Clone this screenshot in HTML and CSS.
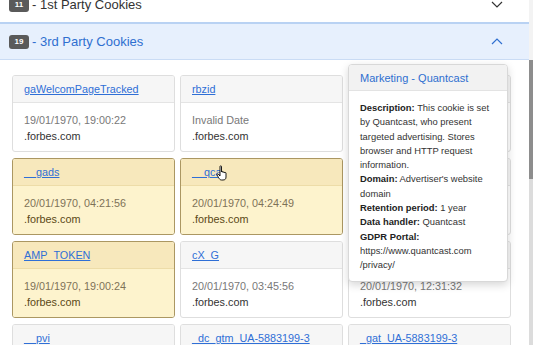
FILE: index.html
```html
<!DOCTYPE html>
<html>
<head>
<meta charset="utf-8">
<link rel="stylesheet" href="styles.css">
</head>
<body>
<div class="app">
  <main class="content">
    <div class="acc-header first">
      <span class="badge">11</span>
      <span class="acc-title">- 1st Party Cookies</span>
      <svg class="chev" width="12" height="7" viewBox="0 0 12 7"><polyline points="1,1 6,6 11,1" fill="none" stroke="#333" stroke-width="1.2"/></svg>
    </div>
    <div class="acc-header active">
      <span class="badge">19</span>
      <span class="acc-title">- 3rd Party Cookies</span>
      <svg class="chev" width="12" height="7" viewBox="0 0 12 7"><polyline points="1,6 6,1 11,6" fill="none" stroke="#2f6fd0" stroke-width="1.2"/></svg>
    </div>
    <div class="acc-body">
      <div class="grid">
        <div class="card"><div class="card-head"><a href="#">gaWelcomPageTracked</a></div><div class="card-body"><div class="date">19/01/1970, 19:00:22</div><div class="domain">.forbes.com</div></div></div>
        <div class="card"><div class="card-head"><a href="#">rbzid</a></div><div class="card-body"><div class="date">Invalid Date</div><div class="domain">.forbes.com</div></div></div>
        <div class="card"><div class="card-head"><a href="#">_cb</a></div><div class="card-body"><div class="date">20/01/1970, 05:12:10</div><div class="domain">.forbes.com</div></div></div>

        <div class="card warn"><div class="card-head"><a href="#">__gads</a></div><div class="card-body"><div class="date">20/01/1970, 04:21:56</div><div class="domain">.forbes.com</div></div></div>
        <div class="card warn"><div class="card-head"><a href="#">__qca</a></div><div class="card-body"><div class="date">20/01/1970, 04:24:49</div><div class="domain">.forbes.com</div></div></div>
        <div class="card"><div class="card-head"><a href="#">_cb_ls</a></div><div class="card-body"><div class="date">20/01/1970, 05:12:10</div><div class="domain">.forbes.com</div></div></div>

        <div class="card warn"><div class="card-head"><a href="#">AMP_TOKEN</a></div><div class="card-body"><div class="date">19/01/1970, 19:00:24</div><div class="domain">.forbes.com</div></div></div>
        <div class="card"><div class="card-head"><a href="#">cX_G</a></div><div class="card-body"><div class="date">20/01/1970, 03:45:56</div><div class="domain">.forbes.com</div></div></div>
        <div class="card"><div class="card-head"><a href="#">_chartbeat2</a></div><div class="card-body"><div class="date">20/01/1970, 12:31:32</div><div class="domain">.forbes.com</div></div></div>

        <div class="card"><div class="card-head"><a href="#">__pvi</a></div><div class="card-body"><div class="date">20/01/1970, 05:00:00</div><div class="domain">.forbes.com</div></div></div>
        <div class="card"><div class="card-head"><a href="#">_dc_gtm_UA-5883199-3</a></div><div class="card-body"><div class="date">19/01/1970, 19:01:22</div><div class="domain">.forbes.com</div></div></div>
        <div class="card"><div class="card-head"><a href="#">_gat_UA-5883199-3</a></div><div class="card-body"><div class="date">19/01/1970, 19:01:22</div><div class="domain">.forbes.com</div></div></div>
      </div>
    </div>

    <div class="popover">
      <div class="pop-head">Marketing - Quantcast</div>
      <div class="pop-body">
        <b>Description:</b> This cookie is set<br>
        by Quantcast, who present<br>
        targeted advertising. Stores<br>
        browser and HTTP request<br>
        information.<br>
        <b>Domain:</b> Advertiser's website<br>
        domain<br>
        <b>Retention period:</b> 1 year<br>
        <b>Data handler:</b> Quantcast<br>
        <b>GDPR Portal:</b><br>
        https://www.quantcast.com<br>
        /privacy/
      </div>
    </div>

    <svg class="cursor" width="12" height="16" viewBox="0 0 12 16"><path d="M4 1.5C4 0.6 5.5 0.6 5.5 1.5V7C5.5 6.2 7 6.2 7 7V7.5C7 6.8 8.5 6.8 8.5 7.5V8C8.5 7.3 10 7.3 10 8V12C10 14 9 15 7 15H5.5C4 15 3.5 14 2.5 12.5L1 10C0.6 9.3 1.5 8.5 2.2 9.2L4 11Z" fill="#fff" stroke="#000" stroke-width="0.9" stroke-linejoin="round"/></svg>
  </main>
  <div class="scrollbar">
    <div class="sb-top"></div>
    <div class="sb-thumb"></div>
    <div class="sb-track"></div>
  </div>
</div>
</body>
</html>
```

FILE: styles.css
```css
* { box-sizing: border-box; }
html, body { margin: 0; padding: 0; }
body {
  font-family: "Liberation Sans", Arial, sans-serif;
  background: #fff;
  color: #333;
}
.app {
  display: flex;
  width: 533px;
  height: 345px;
  overflow: hidden;
}
.content {
  flex: 1;
  position: relative;
  overflow: hidden;
}
.acc-header {
  display: flex;
  align-items: center;
  height: 35px;
  padding: 0 26px 0 9px;
  gap: 3px;
  font-size: 13px;
  color: #333;
}
.acc-header.first {
  margin-top: -13px;
}
.acc-header.active {
  height: 38px;
  background: #e7f0fd;
  color: #2f6fd0;
  border-top: 2px solid #b9d2f3;
  border-bottom: 1px solid #cadcf5;
}
.acc-title {
  margin-right: auto;
}
.badge {
  display: inline-flex;
  align-items: center;
  justify-content: center;
  width: 20px;
  height: 14px;
  background: #5a5a5a;
  color: #fff;
  font-size: 8px;
  font-weight: bold;
  border-radius: 3px;
}
.chev {
  display: block;
}
.acc-body {
  padding: 15px 18px 0 12px;
}
.grid {
  display: grid;
  grid-template-columns: repeat(3, 163px);
  grid-auto-rows: 77px;
  column-gap: 5px;
  row-gap: 6px;
}
.card {
  border: 1px solid #dedede;
  border-radius: 3px;
  overflow: hidden;
  background: #fff;
  font-size: 10.8px;
}
.card-head {
  background: #f6f6f6;
  border-bottom: 1px solid #e4e4e4;
  padding: 6px 11px 5px;
  line-height: 15px;
  white-space: nowrap;
}
.card-head a {
  color: #2f6fd6;
  text-decoration: underline;
}
.card-body {
  padding: 9px 11px 7px;
  line-height: 16px;
}
.date { color: #787878; }
.domain { color: #333; }
.card.warn {
  border-color: #ab9762;
}
.card.warn .card-head {
  background: #f7e8bc;
  border-bottom-color: #eddca8;
}
.card.warn .card-body {
  background: #fdf3cd;
  height: 100%;
}
.card.warn .date { color: #7d7258; }
.card.warn .domain { color: #5a4816; }

.popover {
  position: absolute;
  left: 348px;
  top: 64px;
  width: 160px;
  background: #fff;
  border: 1px solid #d8d8d8;
  border-radius: 4px;
  box-shadow: 0 3px 8px rgba(0, 0, 0, 0.16);
  overflow: hidden;
}
.pop-head {
  height: 26px;
  display: flex;
  align-items: center;
  padding: 0 11px;
  background: #f2f2f2;
  border-bottom: 1px solid #e3e3e3;
  color: #2f6fd0;
  font-size: 11px;
}
.pop-body {
  padding: 10px 11px 8px;
  font-size: 9.4px;
  line-height: 14.3px;
  color: #333;
  white-space: nowrap;
}
.pop-body b { color: #222; }
.cursor {
  position: absolute;
  left: 216px;
  top: 165px;
}
.scrollbar {
  width: 4px;
  display: flex;
  flex-direction: column;
}
.sb-top { height: 60px; background: #f3f3f3; }
.sb-thumb { height: 119px; background: #8d8d8d; }
.sb-track { flex: 1; background: #dcdcdc; }
```
